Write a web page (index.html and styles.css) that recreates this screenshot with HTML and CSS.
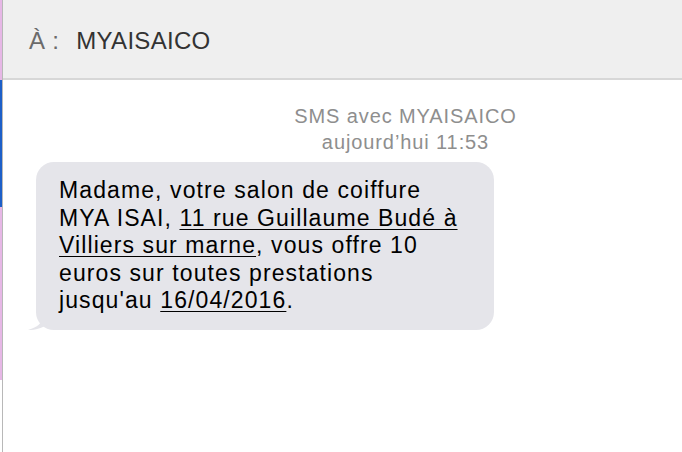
FILE: index.html
```html
<!DOCTYPE html>
<html lang="fr">
<head>
<meta charset="utf-8">
<link rel="stylesheet" href="styles.css">
</head>
<body>
<div class="app">
  <div class="edge">
    <span class="seg pink-top"></span>
    <span class="seg blue"></span>
    <span class="seg pink-bottom"></span>
    <span class="seg grey"></span>
  </div>
  <div class="main">
    <header class="to-bar">
      <span class="to-label">À :</span>
      <span class="to-name">MYAISAICO</span>
    </header>
    <section class="thread">
      <div class="meta">
        <div>SMS avec MYAISAICO</div>
        <div>aujourd’hui 11:53</div>
      </div>
      <div class="bubble">
        Madame, votre salon de coiffure<br>
        MYA ISAI, <u>11 rue Guillaume Budé à</u><br>
        <u>Villiers sur marne</u>, vous offre 10<br>
        euros sur toutes prestations<br>
        jusqu'au <u>16/04/2016</u>.
        <svg class="tail" width="20" height="18" viewBox="0 0 20 18"><path d="M14 0 L14 5 C14 11 10 15 0 18 C8 18 14 16 20 12 L20 0 Z" fill="#e5e5ea"/></svg>
      </div>
    </section>
  </div>
</div>
</body>
</html>
```
FILE: styles.css
```css
* { box-sizing: border-box; }
html, body { margin: 0; padding: 0; background: #fff; }
body { font-family: "Liberation Sans", Arial, sans-serif; }
.app { display: flex; width: 682px; height: 452px; overflow: hidden; }
.edge { display: flex; flex-direction: column; width: 3px; border-right: 1px solid #b8b8b8; flex: none; }
.seg { display: block; width: 2px; }
.pink-top { height: 80px; background: #e6b7e6; }
.blue { height: 127px; background: #1d5fc8; }
.pink-bottom { height: 173px; background: #e6b7e6; }
.grey { flex: 1; background: #fff; }
.main { flex: 1; display: flex; flex-direction: column; }
.to-bar { height: 80px; background: #efefef; border-bottom: 2px solid #d7d7d7; display: flex; align-items: center; padding-left: 26px; padding-top: 4px; font-size: 24px; letter-spacing: 0.3px; }
.to-label { color: #6b6b6b; margin-right: 17px; }
.to-name { color: #333; }
.thread { padding-top: 23px; }
.meta { text-align: center; color: #8e8e8e; font-size: 20px; letter-spacing: 0.9px; line-height: 26px; padding-left: 126px; }
.bubble { position: relative; margin: 7px 0 0 33px; width: 458px; background: #e5e5ea; border-radius: 18px; padding: 15px 10px 15px 23px; font-size: 23px; letter-spacing: 1.1px; line-height: 27.5px; color: #000; }
.bubble u { text-decoration-thickness: 1px; text-underline-offset: 3px; }
.tail { position: absolute; left: -8px; bottom: 0; }
```
